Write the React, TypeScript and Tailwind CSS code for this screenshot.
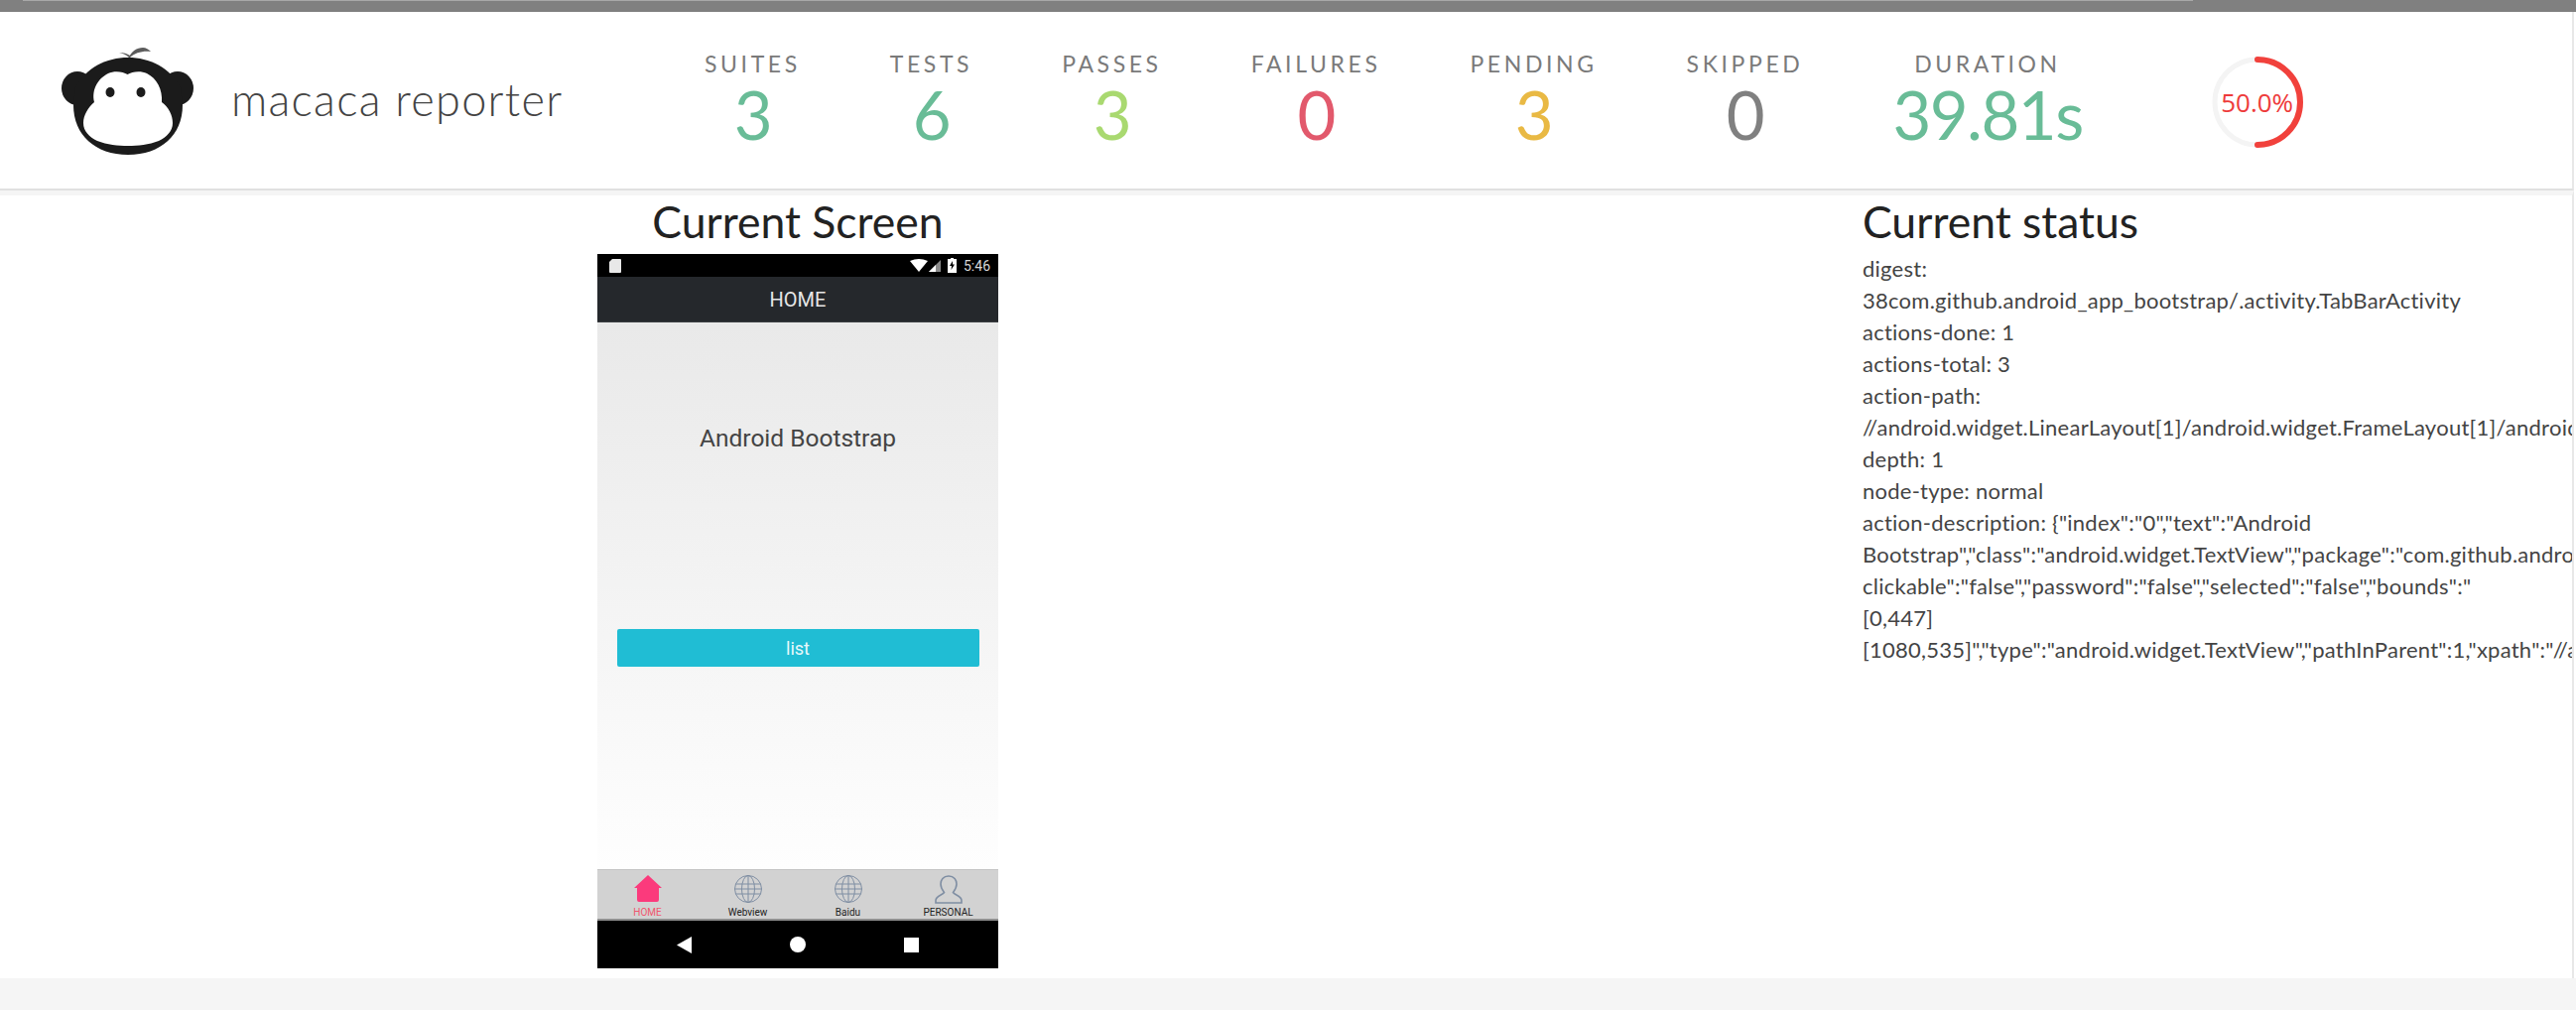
const rowFont = { fontFamily: 'Lato, "Open Sans", sans-serif' };

function Monkey() {
  return (
    <svg width="134" height="108" viewBox="0 0 134 108" className="block shrink-0">
      <path d="M68 10C70 4 76 0 82 0C85 0 88 2 90 4C82 3 74 5 69 10ZM68 10C65 7 62 6 58 5C63 5 66 6 69 8Z" fill="#5c5c5c" />
      <ellipse cx="16" cy="41" rx="16" ry="17" fill="#1b1b1b" />
      <ellipse cx="117" cy="41" rx="16" ry="17" fill="#1b1b1b" />
      <path d="M14 40C25 20 45 10 67 10C89 10 109 20 120 40L122 58C122 88 100 108 67 108C34 108 12 88 12 58Z" fill="#1b1b1b" />
      <path d="M66.500 27C71 24 80 23 86 26C96 31 102 42 101 55C108 60 112 68 112 76C112 84 106 90 98 94C88 98 77 99 67 99C57 99 46 98 36 94C28 90 22 84 22 76C22 68 27 60 33 55C30 42 37 31 47 26C53 23 62 24 66.500 27Z" fill="#ffffff" />
      <ellipse cx="49" cy="45" rx="4.500" ry="5" fill="#1b1b1b" />
      <ellipse cx="80" cy="45" rx="4.500" ry="5" fill="#1b1b1b" />
    </svg>
  );
}

function Stat({ label, value, color }: { label: string; value: string; color: string }) {
  return (
    <div className="flex flex-col items-center" style={rowFont}>
      <div className="text-[23px] leading-[27px] tracking-[3.6px] text-[#7a7a7a] whitespace-nowrap">{label}</div>
      <div className={`text-[67px] leading-[70px] mt-[2px] font-normal tracking-[-1.5px] whitespace-nowrap ${color}`}>{value}</div>
    </div>
  );
}

function Globe() {
  return (
    <svg width="30" height="30" viewBox="0 0 30 30" fill="none" stroke="#7f8ea3" strokeWidth="1">
      <circle cx="15" cy="15" r="13.500" />
      <ellipse cx="15" cy="15" rx="6.500" ry="13.500" />
      <path d="M15 1.500V28.500M2.500 10H27.500M2.500 20H27.500M1.500 15H28.500" />
    </svg>
  );
}

function Tab({ label, red, children }: { label: string; red?: boolean; children: React.ReactNode }) {
  return (
    <div className="w-[101px] flex flex-col items-center">
      <div className="h-[30px] mt-[4px] flex items-center justify-center">{children}</div>
      <div className={`mt-[3px] text-[10px] leading-[12px] whitespace-nowrap ${red ? "text-[#f0566e]" : "text-[#222222]"}`} style={{ fontFamily: "Roboto, sans-serif" }}>{label}</div>
    </div>
  );
}

function Phone() {
  return (
    <div className="w-[404px] h-[720px] flex flex-col" style={{ fontFamily: "Roboto, sans-serif" }}>
      <div className="h-[23px] bg-black flex items-center justify-between pl-[12px] pr-[8px]">
        <svg width="12" height="14" viewBox="0 0 12 14"><path d="M3 0H11Q12 0 12 1V13Q12 14 11 14H1Q0 14 0 13V3Z" fill="#e8e8e8" /></svg>
        <div className="flex items-center gap-[7px]">
          <div className="flex items-center gap-[1px]">
            <svg width="18" height="13" viewBox="0 0 18 13"><path d="M0 2Q9 -2 18 2L9 13Z" fill="#ffffff" /></svg>
            <svg width="12" height="12" viewBox="0 0 12 12"><path d="M0 12L12 0V12Z" fill="#8a8a8a" /><path d="M0 12L7 5V12Z" fill="#ffffff" /></svg>
          </div>
          <svg width="9" height="15" viewBox="0 0 9 15"><path d="M3 0H6V1H9V15H0V1H3Z" fill="#ffffff" /><path d="M5 3L2 8H4L3.500 12L7 6.500H5Z" fill="#000000" /></svg>
          <span className="text-[14px] leading-none text-[#d8d8d8]">5:46</span>
        </div>
      </div>
      <div className="h-[46px] bg-[#25282c] border-b border-[#3a3d40] flex items-center justify-center text-[#e6e6e6] text-[20px]">HOME</div>
      <div className="h-[551px] bg-gradient-to-b from-[#e9e9e9] to-[#fefefe] flex flex-col items-center">
        <div className="mt-[102px] text-[24.500px] leading-[30px] text-[#444444]">Android Bootstrap</div>
        <div className="mt-[177px] w-[365px] h-[38px] bg-[#20bdd4] rounded-[2px] flex items-center justify-center text-[18px] text-[#e8f8fb]">list</div>
      </div>
      <div className="h-[52px] bg-[#d2d2d2] border-t border-[#c4c4c4] border-b-2 border-b-[#8f8f8f] flex">
        <Tab label="HOME" red>
          <svg width="28" height="28" viewBox="0 0 28 28"><path d="M14 0L28 13H25V25Q25 27 23 27H5Q3 27 3 25V13H0Z" fill="#fb3a7c" /></svg>
        </Tab>
        <Tab label="Webview"><Globe /></Tab>
        <Tab label="Baidu"><Globe /></Tab>
        <Tab label="PERSONAL">
          <svg width="28" height="29" viewBox="0 0 28 29" fill="none" stroke="#7f8ea3" strokeWidth="1.600">
            <path d="M14 1C8.500 1 6 5 6 9C6 13 8 15.500 9.500 17.500C8 20 1 21 1 25.500V28H27V25.500C27 21 20 20 18.500 17.500C20 15.500 22 13 22 9C22 5 19.500 1 14 1Z" />
          </svg>
        </Tab>
      </div>
      <div className="flex-1 bg-black flex items-center justify-center gap-[99px]">
        <svg width="15" height="17" viewBox="0 0 15 17"><path d="M15 0V17L0 8.500Z" fill="#ffffff" /></svg>
        <div className="w-[16px] h-[16px] rounded-full bg-white" />
        <div className="w-[15px] h-[15px] bg-white" />
      </div>
    </div>
  );
}

const statusLines = [
  "digest:",
  "38com.github.android_app_bootstrap/.activity.TabBarActivity",
  "actions-done: 1",
  "actions-total: 3",
  "action-path:",
  "//android.widget.LinearLayout[1]/android.widget.FrameLayout[1]/android.widget.LinearLayout[1]",
  "depth: 1",
  "node-type: normal",
  'action-description: {"index":"0","text":"Android',
  'Bootstrap","class":"android.widget.TextView","package":"com.github.android_app_bootstrap","content-desc":"","checkable":"false","',
  'clickable":"false","password":"false","selected":"false","bounds":"',
  "[0,447]",
  '[1080,535]","type":"android.widget.TextView","pathInParent":1,"xpath":"//android.widget.LinearLayout[1]"}',
];

export default function App() {
  return (
    <div className="w-[2596px] h-[1018px] overflow-hidden bg-white flex flex-col" style={rowFont}>
      <div className="h-[12px] shrink-0 bg-[#808080]">
        <div className="ml-[23px] w-[2187px] h-[1px] bg-[#a8a8a8]" />
      </div>
      <header className="h-[180px] shrink-0 mr-[2px] bg-white border-b-2 border-b-[#e0e0e0] border-r-2 border-r-[#e8e8e8] flex items-start">
        <div className="ml-[62px] mt-[36px]"><Monkey /></div>
        <div className="ml-[37px] mt-[60px] text-[45px] leading-[56px] font-light tracking-[1.3px] text-[#444444] w-[477px] whitespace-nowrap">macaca reporter</div>
        <div className="mt-[39px] flex gap-[90px]">
          <Stat label="SUITES" value="3" color="text-[#69bc97]" />
          <Stat label="TESTS" value="6" color="text-[#69bc97]" />
          <Stat label="PASSES" value="3" color="text-[#a9d970]" />
          <Stat label="FAILURES" value="0" color="text-[#e2596c]" />
          <Stat label="PENDING" value="3" color="text-[#e9b944]" />
          <Stat label="SKIPPED" value="0" color="text-[#808080]" />
          <Stat label="DURATION" value="39.81s" color="text-[#69bc97]" />
        </div>
        <div className="relative ml-[130px] mt-[45px] w-[92px] h-[92px]">
          <svg width="92" height="92" viewBox="0 0 92 92" fill="none">
            <circle cx="46" cy="46" r="43" stroke="#f4f4f4" strokeWidth="5" />
            <path d="M46 3A43 43 0 0 1 46 89" stroke="#f1413c" strokeWidth="6" strokeLinecap="round" />
          </svg>
          <div className="absolute inset-0 flex items-center justify-center text-[26px] text-[#ee3b3b]" style={{ fontFamily: '"Open Sans", sans-serif' }}>50.0%</div>
        </div>
      </header>
      <main className="h-[794px] shrink-0 mr-[2px] bg-white border-t-[5px] border-t-[#f5f5f5] border-r-2 border-r-[#e8e8e8] flex overflow-hidden">
        <div className="ml-[602px] w-[404px] shrink-0 flex flex-col items-center">
          <h1 className="mb-[7px] text-[44.500px] leading-[52px] text-[#222222] whitespace-nowrap">Current Screen</h1>
          <Phone />
        </div>
        <div className="ml-[871px] flex-1 min-w-0 overflow-hidden">
          <h1 className="mb-[6px] text-[44.500px] leading-[52px] text-[#222222] whitespace-nowrap">Current status</h1>
          <div className="text-[22px] leading-[32px] tracking-[0.25px] text-[#444444]">
            {statusLines.map((line) => (
              <div key={line} className="whitespace-nowrap">{line}</div>
            ))}
          </div>
        </div>
      </main>
      <div className="flex-1 bg-[#f5f5f5]" />
    </div>
  );
}
